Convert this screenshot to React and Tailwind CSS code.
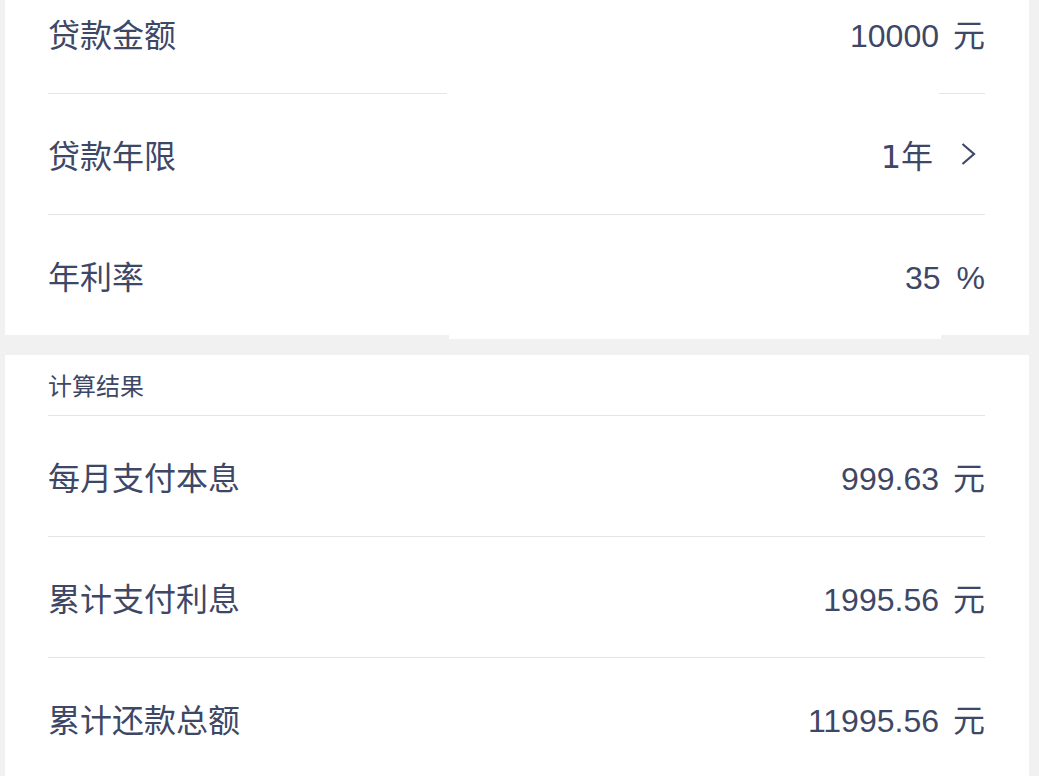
import React from "react";

const cjk = { fontFamily: '"DejaVu Sans", "Noto Sans CJK SC", sans-serif' };
const num = { fontFamily: '"Liberation Sans", "Noto Sans CJK SC", sans-serif' };

function InputRow({ label, value, unit, unitClass, unitStyle, last }) {
  return (
    <div
      className={
        last
          ? "flex h-[120px] items-center justify-between"
          : "flex h-[121px] items-center justify-between border-b border-[#e5e5e5]"
      }
    >
      <span className="pt-[6px] text-[32px] text-[#3e4765]">{label}</span>
      <div className="flex self-stretch items-center">
        {/* input box, slightly lower than the row */}
        <div className="flex w-[492px] self-stretch mt-[4px] -mb-[4px] pb-[2px] items-center justify-end bg-white">
          <span className="text-[32px] text-[#3e4765]" style={num}>{value}</span>
        </div>
        <span className={unitClass} style={unitStyle}>{unit}</span>
      </div>
    </div>
  );
}

function ResultRow({ label, value, last }) {
  return (
    <div
      className={
        last
          ? "flex h-[120px] items-center justify-between"
          : "flex h-[121px] items-center justify-between border-b border-[#e5e5e5]"
      }
    >
      <span className="pt-[6px] text-[32px] text-[#3e4765]">{label}</span>
      <div className="flex items-center pt-[6px]">
        <span className="text-[32px] text-[#3e4765]" style={num}>{value}</span>
        <span className="ml-[14px] text-[32px] text-[#3e4765]">元</span>
      </div>
    </div>
  );
}

export default function App() {
  return (
    <div className="flex flex-col h-screen overflow-hidden bg-[#f1f1f1]" style={cjk}>
      <div className="-mt-[27px] ml-[5px] mr-[10px] bg-white pl-[43px] pr-[44px]">
        <InputRow
          label="贷款金额"
          value="10000"
          unit="元"
          unitClass="ml-[14px] pt-[6px] text-[32px] text-[#3e4765]"
        />

        <div className="flex h-[121px] items-center justify-between border-b border-[#e5e5e5]">
          <span className="pt-[6px] text-[32px] text-[#3e4765]">贷款年限</span>
          <div className="flex items-center">
            <span className="pt-[6px] text-[32px] text-[#3e4765]">1年</span>
            <svg width="16" height="24" viewBox="0 0 16 24" className="ml-[27px] mr-[9px]">
              <path d="M2.5 2 L14 12 L2.5 22" fill="none" stroke="#3e4765" strokeWidth="2.2" />
            </svg>
          </div>
        </div>

        <InputRow
          label="年利率"
          value="35"
          unit="%"
          unitClass="ml-[16px] pt-[6px] text-[32px] text-[#3e4765]"
          unitStyle={num}
          last
        />
      </div>

      <div className="mt-[20px] ml-[5px] mr-[10px] bg-white pl-[43px] pr-[44px]">
        <div className="flex h-[61px] items-center border-b border-[#e5e5e5]">
          <span className="pt-[4px] text-[24px] text-[#3e4765]">计算结果</span>
        </div>
        <ResultRow label="每月支付本息" value="999.63" />
        <ResultRow label="累计支付利息" value="1995.56" />
        <ResultRow label="累计还款总额" value="11995.56" last />
      </div>
    </div>
  );
}
